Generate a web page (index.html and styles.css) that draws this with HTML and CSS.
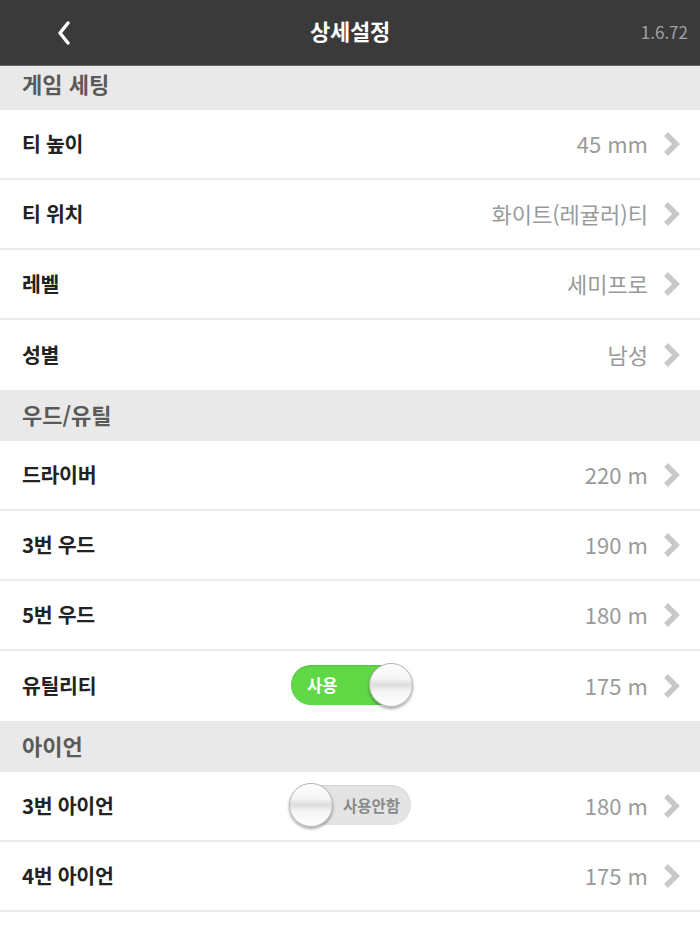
FILE: index.html
```html
<!DOCTYPE html>
<html lang="ko">
<head>
<meta charset="utf-8">
<title>상세설정</title>
<link rel="stylesheet" href="styles.css">
</head>
<body>
<div class="app">
  <header class="topbar">
    <div class="topbar-back">
      <svg width="16" height="24" viewBox="0 0 16 24"><polyline points="12,2 4,12 12,22" fill="none" stroke="#fff" stroke-width="3.4" stroke-linecap="round" stroke-linejoin="round"/></svg>
    </div>
    <div class="topbar-title">상세설정</div>
    <div class="topbar-version">1.6.72</div>
  </header>

  <div class="section section--first">게임 세팅</div>
  <div class="row"><span class="label">티 높이</span><span class="mid"></span><span class="value">45 mm<svg class="chev" viewBox="0 0 18 26"><polyline points="4,3 14,13 4,23"/></svg></span></div>
  <div class="row"><span class="label">티 위치</span><span class="mid"></span><span class="value">화이트(레귤러)티<svg class="chev" viewBox="0 0 18 26"><polyline points="4,3 14,13 4,23"/></svg></span></div>
  <div class="row"><span class="label">레벨</span><span class="mid"></span><span class="value">세미프로<svg class="chev" viewBox="0 0 18 26"><polyline points="4,3 14,13 4,23"/></svg></span></div>
  <div class="row row--last"><span class="label">성별</span><span class="mid"></span><span class="value">남성<svg class="chev" viewBox="0 0 18 26"><polyline points="4,3 14,13 4,23"/></svg></span></div>

  <div class="section">우드/유틸</div>
  <div class="row"><span class="label">드라이버</span><span class="mid"></span><span class="value">220 m<svg class="chev" viewBox="0 0 18 26"><polyline points="4,3 14,13 4,23"/></svg></span></div>
  <div class="row"><span class="label">3번 우드</span><span class="mid"></span><span class="value">190 m<svg class="chev" viewBox="0 0 18 26"><polyline points="4,3 14,13 4,23"/></svg></span></div>
  <div class="row"><span class="label">5번 우드</span><span class="mid"></span><span class="value">180 m<svg class="chev" viewBox="0 0 18 26"><polyline points="4,3 14,13 4,23"/></svg></span></div>
  <div class="row row--last"><span class="label">유틸리티</span>
    <span class="mid"><span class="toggle toggle--on"><span class="toggle-text">사용</span><span class="knob"></span></span></span>
    <span class="value">175 m<svg class="chev" viewBox="0 0 18 26"><polyline points="4,3 14,13 4,23"/></svg></span></div>

  <div class="section">아이언</div>
  <div class="row"><span class="label">3번 아이언</span>
    <span class="mid"><span class="toggle toggle--off"><span class="knob"></span><span class="toggle-text">사용안함</span></span></span>
    <span class="value">180 m<svg class="chev" viewBox="0 0 18 26"><polyline points="4,3 14,13 4,23"/></svg></span></div>
  <div class="row"><span class="label">4번 아이언</span><span class="mid"></span><span class="value">175 m<svg class="chev" viewBox="0 0 18 26"><polyline points="4,3 14,13 4,23"/></svg></span></div>
</div>
</body>
</html>
```

FILE: styles.css
```css
* { box-sizing: border-box; }
html, body { margin: 0; padding: 0; background: #fff; }
body {
  font-family: "Noto Sans CJK KR", "Noto Sans", sans-serif;
  width: 700px;
  height: 934px;
  overflow: hidden;
}
.app { display: flex; flex-direction: column; }

.topbar {
  height: 66px;
  background: #3a3a3a;
  border-bottom: 1px solid #6a6a6a;
  display: grid;
  grid-template-columns: 1fr auto 1fr;
  align-items: center;
  padding: 0 12px;
}
.topbar-back { display: flex; align-items: center; padding-left: 44px; }
.topbar-back svg { width: 16px; height: 24px; }
.topbar-title {
  color: #fff;
  font-size: 22px;
  font-weight: 700;
  letter-spacing: -0.3px;
  padding-bottom: 5px;
}
.topbar-version {
  justify-self: end;
  color: #a2a2a2;
  font-size: 17px;
  padding-bottom: 2px;
}

.section {
  height: 51px;
  background: #e9e9e9;
  display: flex;
  align-items: center;
  padding-left: 22px;
  padding-bottom: 3px;
  font-size: 22px;
  font-weight: 700;
  color: #5a5a5a;
}
.section--first {
  height: 44px;
  padding-bottom: 10px;
}

.row {
  height: 70px;
  border-bottom: 2px solid #ebebeb;
  display: grid;
  grid-template-columns: 1fr auto 1fr;
  align-items: center;
  padding: 0 20px 2px 22px;
}
.row--last { border-bottom: none; }
.label {
  font-size: 20.5px;
  font-weight: 700;
  color: #222;
  letter-spacing: -0.3px;
}
.value {
  justify-self: end;
  display: flex;
  align-items: center;
  font-size: 22px;
  color: #9a9a9a;
}
.chev {
  width: 18px;
  height: 26px;
  margin-left: 14px;
  margin-top: 2px;
  fill: none;
  stroke: #c8c8c8;
  stroke-width: 5.5;
  stroke-linejoin: miter;
}

.mid { display: flex; justify-content: center; }
.toggle {
  position: relative;
  width: 120px;
  height: 40px;
  border-radius: 20px;
  display: flex;
  align-items: center;
}
.toggle--on {
  background: #60d846;
  box-shadow: inset 0 1px 2px rgba(0,0,0,0.12);
}
.toggle--off {
  background: #e4e4e4;
  box-shadow: inset 0 1px 2px rgba(0,0,0,0.08);
}
.toggle-text { font-size: 16.5px; font-weight: 700; }
.toggle--on .toggle-text { color: #fff; margin-left: 16px; }
.toggle--off .toggle-text { color: #8a8a8a; margin-left: 10px; font-size: 15.5px; }
.knob {
  width: 44px;
  height: 44px;
  border-radius: 50%;
  border: 1px solid #b5b5b5;
  background: linear-gradient(#ffffff 0%, #f4f4f4 35%, #dcdcdc 50%, #f4f4f4 65%, #ffffff 100%);
  box-shadow: 0 2px 3px rgba(0,0,0,0.35);
  flex: none;
}
.toggle--on .knob { margin-left: auto; margin-right: -2px; }
.toggle--off .knob { margin-left: -2px; }
```
